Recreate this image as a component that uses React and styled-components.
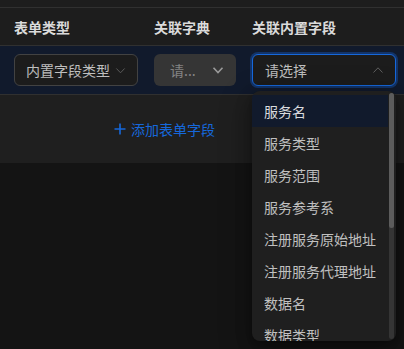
import React from 'react';
import styled, { createGlobalStyle } from 'styled-components';

const GlobalStyle = createGlobalStyle`
    html {
        overflow: hidden;
    }
    body {
        margin: 0;
        padding: 0;
        min-height: 349px;
        background-color: #141414;
        font-family: "Noto Sans CJK SC", "Noto Sans", sans-serif;
        font-size: 14px;
    }
`

const Panel = styled.div`
    background-color: #1f1f1f;
    width: 404px;
`
const TopStrip = styled.div`
    height: 7px;
    background-color: #1d1d1d;
    border-bottom: 1px solid #303030;
`
const Row = styled.div`
    display: grid;
    grid-template-columns: 124px 82px 144px;
    column-gap: 16px;
    align-items: center;
    padding: 0 8px 0 14px;
    height: ${p => p.h}px;
    background-color: ${p => p.bg};
    border-bottom: 1px solid #303030;
`
const HeadCell = styled.div`
    color: rgba(255, 255, 255, 0.85);
    font-weight: 700;
    font-size: 14px;
    line-height: 22px;
`
const SelectBox = styled.div`
    position: relative;
    box-sizing: border-box;
    height: 32px;
    display: flex;
    align-items: center;
    justify-content: space-between;
    padding: 0 11px 0 ${p => p.pl || 11}px;
    border-radius: 6px;
    border: 1px solid ${p => p.focused ? '#1668dc' : p.disabled ? 'transparent' : '#424242'};
    background-color: ${p => p.disabled ? '#353535' : '#1c1c1c'};
    box-shadow: ${p => p.focused ? '0 0 0 2px rgba(22, 104, 220, 0.35)' : 'none'};
    color: ${p => p.disabled ? 'rgba(255,255,255,0.4)' : 'rgba(255,255,255,0.72)'};
    white-space: nowrap;
`
const SelectText = styled.span`
    line-height: 22px;
`
const Arrow = styled.svg`
    flex: none;
    width: ${p => p.w}px;
    height: ${p => p.w}px;
    margin-left: 4px;
`
const AddRow = styled.div`
    height: 68px;
    display: flex;
    align-items: center;
    padding-left: 114px;
    color: #1668dc;
    gap: 5px;
`
const Dropdown = styled.div`
    position: absolute;
    top: 36px;
    left: -1px;
    width: 144px;
    height: 250px;
    box-sizing: border-box;
    padding: 4px 0;
    background-color: #1f1f1f;
    border-radius: 8px;
    box-shadow: 0 6px 16px 0 rgba(0,0,0,0.3), 0 3px 6px -4px rgba(0,0,0,0.4), 0 9px 28px 8px rgba(0,0,0,0.2);
    overflow: hidden;
    z-index: 10;
`
const Option = styled.div`
    height: 32px;
    line-height: 32px;
    padding: 0 12px;
    margin-right: 8px;
    color: ${p => p.active ? 'rgba(255,255,255,0.85)' : 'rgba(255,255,255,0.72)'};
    background-color: ${p => p.active ? '#111a2c' : 'transparent'};
    white-space: nowrap;
`
const Track = styled.div`
    position: absolute;
    top: 2px;
    right: 2px;
    bottom: 2px;
    width: 5px;
    border-radius: 3px;
    background-color: #353535;
`
const Thumb = styled.div`
    height: 135px;
    border-radius: 3px;
    background-color: #5c5c5c;
`

const options = ['服务名', '服务类型', '服务范围', '服务参考系', '注册服务原始地址', '注册服务代理地址', '数据名', '数据类型'];

function Chevron({ up, w, color, sw }) {
    return (
        <Arrow w={w} viewBox="0 0 12 12" fill="none">
            <path d={up ? 'M1.5 8.5 L6 3.8 L10.5 8.5' : 'M1.5 3.8 L6 8.5 L10.5 3.8'} stroke={color} strokeWidth={sw} />
        </Arrow>
    )
}

export default function App() {
    return (
        <>
            <GlobalStyle />
            <Panel>
                <TopStrip />
                <Row h={37} bg="#1d1d1d">
                    <HeadCell>表单类型</HeadCell>
                    <HeadCell>关联字典</HeadCell>
                    <HeadCell>关联内置字段</HeadCell>
                </Row>
                <Row h={48} bg="#111a2c">
                    <SelectBox>
                        <SelectText>内置字段类型</SelectText>
                        <Chevron w={11} color="#5f5f5f" sw={1} />
                    </SelectBox>
                    <SelectBox disabled pl={15}>
                        <SelectText>请...</SelectText>
                        <Chevron w={12} color="#9a9a9a" sw={1.6} />
                    </SelectBox>
                    <SelectBox focused pl={12}>
                        <SelectText>请选择</SelectText>
                        <Chevron up w={12} color="#5f5f5f" sw={1} />
                        <Dropdown>
                            {options.map((o, i) => (
                                <Option key={o} active={i === 0}>{o}</Option>
                            ))}
                            <Track><Thumb /></Track>
                        </Dropdown>
                    </SelectBox>
                </Row>
                <AddRow>
                    <svg width="12" height="12" viewBox="0 0 12 12">
                        <path d="M6 0.5 V11.5 M0.5 6 H11.5" stroke="#1668dc" strokeWidth="1.6" />
                    </svg>
                    <span>添加表单字段</span>
                </AddRow>
            </Panel>
        </>
    )
}
